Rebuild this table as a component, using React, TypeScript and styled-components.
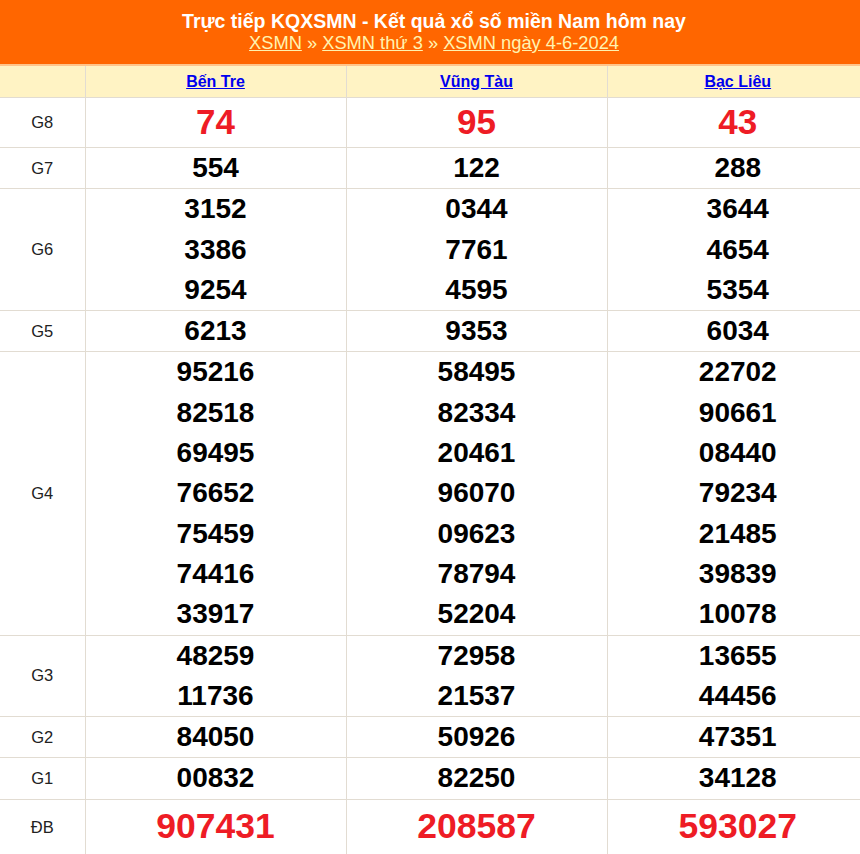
import React from "react";
import styled, { createGlobalStyle } from "styled-components";

const GlobalStyle = createGlobalStyle`
  body {
    margin: 0;
    background: #fff;
    font-family: "Liberation Sans", Arial, sans-serif;
    overflow-x: hidden;
  }
`;

type Prize = {
  label: string;
  values: string[][];
  kind?: "small" | "big";
};

const provinces = ["Bến Tre", "Vũng Tàu", "Bạc Liêu"];

const prizes: Prize[] = [
  { label: "G8", values: [["74"], ["95"], ["43"]], kind: "small" },
  { label: "G7", values: [["554"], ["122"], ["288"]] },
  {
    label: "G6",
    values: [
      ["3152", "3386", "9254"],
      ["0344", "7761", "4595"],
      ["3644", "4654", "5354"],
    ],
  },
  { label: "G5", values: [["6213"], ["9353"], ["6034"]] },
  {
    label: "G4",
    values: [
      ["95216", "82518", "69495", "76652", "75459", "74416", "33917"],
      ["58495", "82334", "20461", "96070", "09623", "78794", "52204"],
      ["22702", "90661", "08440", "79234", "21485", "39839", "10078"],
    ],
  },
  {
    label: "G3",
    values: [
      ["48259", "11736"],
      ["72958", "21537"],
      ["13655", "44456"],
    ],
  },
  { label: "G2", values: [["84050"], ["50926"], ["47351"]] },
  { label: "G1", values: [["00832"], ["82250"], ["34128"]] },
  { label: "ĐB", values: [["907431"], ["208587"], ["593027"]], kind: "big" },
];

const App = () => {
  return (
    <Page>
      <GlobalStyle />
      <Header>
        <Title>Trực tiếp KQXSMN - Kết quả xổ số miền Nam hôm nay</Title>
        <Crumbs>
          <CrumbLink href="#">XSMN</CrumbLink> »{" "}
          <CrumbLink href="#">XSMN thứ 3</CrumbLink> »{" "}
          <CrumbLink href="#">XSMN ngày 4-6-2024</CrumbLink>
        </Crumbs>
      </Header>
      <Table>
        <colgroup>
          <col style={{ width: 85 }} />
          <col />
          <col />
          <col />
        </colgroup>
        <thead>
          <tr>
            <HeadCell />
            {provinces.map((p) => (
              <HeadCell key={p}>
                <ProvinceLink href="#">{p}</ProvinceLink>
              </HeadCell>
            ))}
          </tr>
        </thead>
        <tbody>
          {prizes.map((prize) => (
            <tr key={prize.label}>
              <LabelCell>{prize.label}</LabelCell>
              {prize.values.map((col, i) => (
                <NumberCell key={i} $kind={prize.kind}>
                  {col.map((n) => (
                    <Num key={n} $kind={prize.kind}>
                      {n}
                    </Num>
                  ))}
                </NumberCell>
              ))}
            </tr>
          ))}
        </tbody>
      </Table>
    </Page>
  );
};

export default App;

const Page = styled.div`
  width: 868px;
`;

const Header = styled.div`
  background-color: #ff6600;
  text-align: center;
  padding: 10px 0 10px;
  border-bottom: 2px solid #ffc48a;
`;

const Title = styled.h2`
  margin: 0;
  color: #fff;
  font-size: 19.5px;
  font-weight: bold;
  line-height: 22px;
`;

const Crumbs = styled.div`
  color: #fff3b0;
  font-size: 18.3px;
  line-height: 22px;
`;

const CrumbLink = styled.a`
  color: #fff3b0;
  text-decoration: underline;
`;

const Table = styled.table`
  width: 100%;
  border-collapse: collapse;
  table-layout: fixed;
`;

const HeadCell = styled.th`
  background-color: #fff3c4;
  height: 31px;
  padding: 0;
  border: 1px solid #e2dcd2;
  border-top: none;
  text-align: center;
  vertical-align: middle;
  &:first-child {
    border-left: none;
  }
  &:last-child {
    border-right: none;
  }
`;

const ProvinceLink = styled.a`
  color: #0000ee;
  font-size: 16px;
  font-weight: bold;
  text-decoration: underline;
`;

const LabelCell = styled.td`
  border: 1px solid #e2dcd2;
  border-left: none;
  text-align: center;
  vertical-align: middle;
  font-size: 16.5px;
  color: #222;
  padding: 0;
`;

const NumberCell = styled.td<{ $kind?: "small" | "big" }>`
  border: 1px solid #e2dcd2;
  text-align: center;
  vertical-align: middle;
  padding: ${(p) => (p.$kind === "big" ? "6px 0 10px" : p.$kind === "small" ? "4px 0 5px" : "0")};
  &:last-child {
    border-right: none;
  }
`;

const Num = styled.div<{ $kind?: "small" | "big" }>`
  font-weight: bold;
  line-height: ${(p) => (p.$kind ? "40px" : "40.3px")};
  font-size: ${(p) => (p.$kind === "big" ? "35.5px" : p.$kind === "small" ? "35px" : "28px")};
  color: ${(p) => (p.$kind ? "#ee1c25" : "#000")};
`;
